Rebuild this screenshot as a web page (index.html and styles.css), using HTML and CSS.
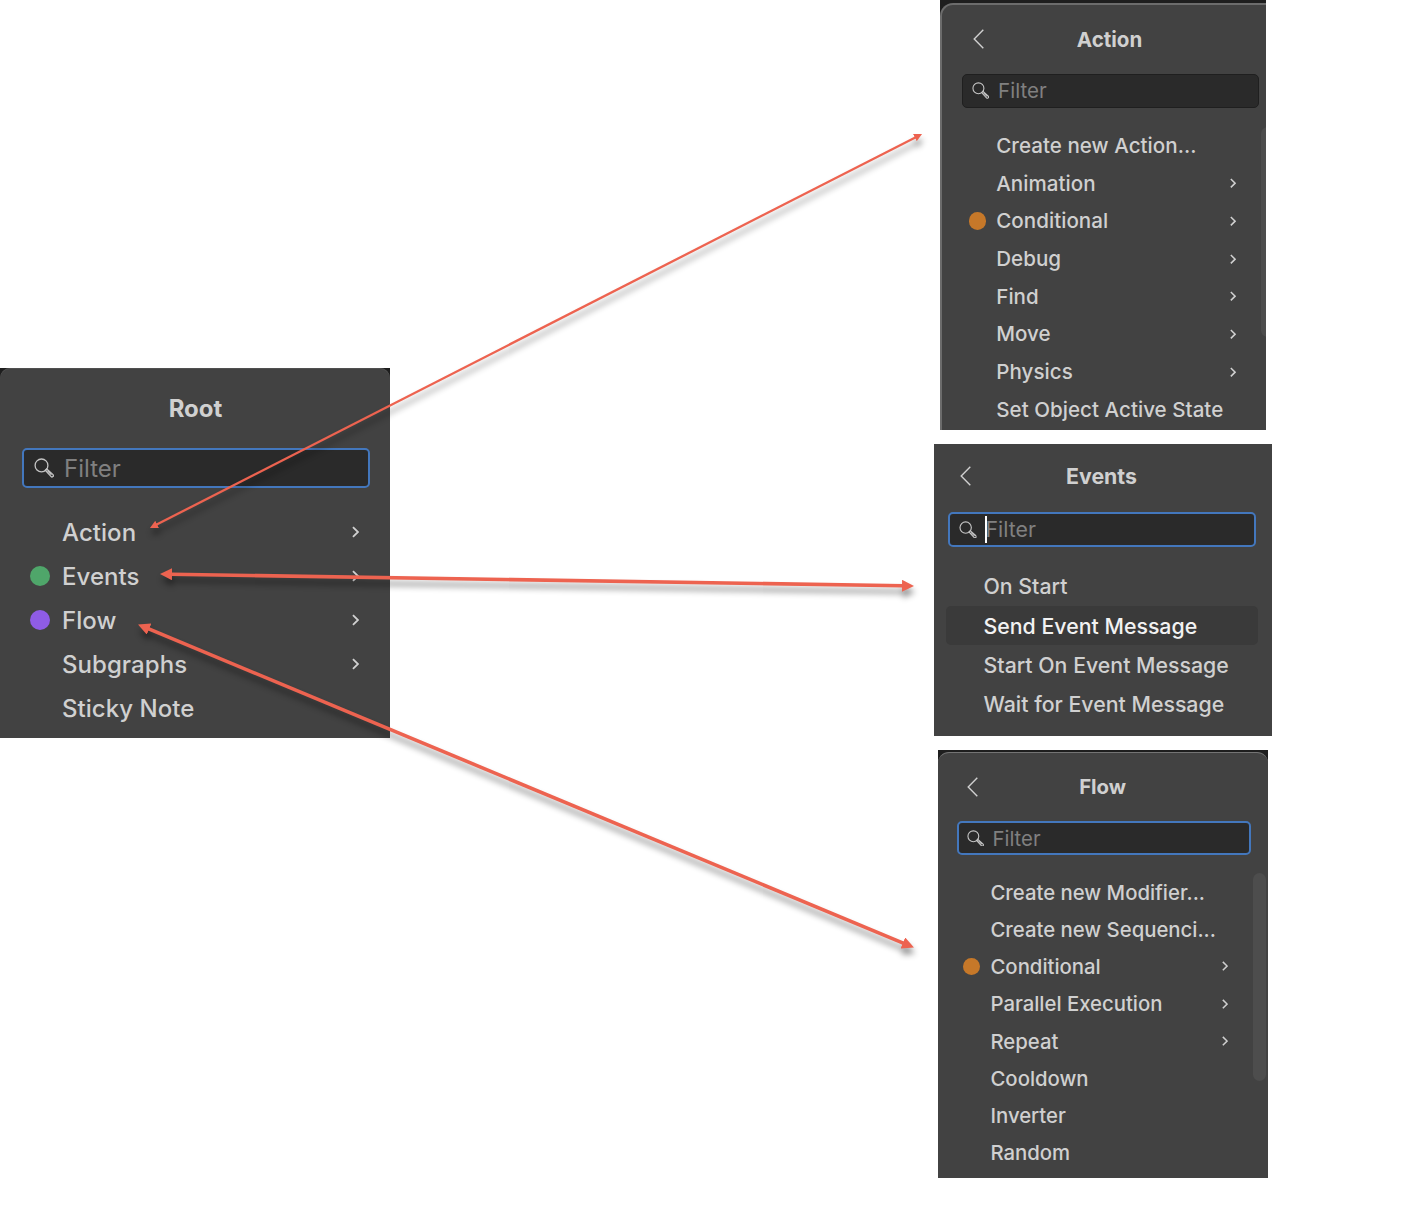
FILE: index.html
```html
<!DOCTYPE html>
<html lang="en">
<head>
<meta charset="utf-8">
<title>Node menu map</title>
<link rel="stylesheet" href="styles.css">
</head>
<body>
<svg class="defs" width="0" height="0" aria-hidden="true">
  <symbol id="search" viewBox="0 0 20 20">
    <circle cx="7.5" cy="7.4" r="6.4"/>
    <path d="M11.3 12.3l1.4-1.4 6.3 5.7q.9 1.1-.1 2t-2-.2z"/>
    <path d="M13.5 12.8l4 4"/>
  </symbol>
  <symbol id="next" viewBox="0 0 6 10"><path d="M.8.9L5 5 .8 9.1"/></symbol>
  <symbol id="back" viewBox="0 0 11 20"><path d="M10.3.8L1.2 10l9.1 9.2"/></symbol>
</svg>
<main class="board">
  <section class="panel root">
    <div class="surface">
      <header class="head"><h2 class="title">Root</h2></header>
      <div class="field focus"><svg class="glass"><use href="#search"/></svg><span class="hint">Filter</span></div>
      <ul class="list">
        <li class="row"><span class="label">Action</span><svg class="next"><use href="#next"/></svg></li>
        <li class="row"><i class="dot green"></i><span class="label">Events</span><svg class="next"><use href="#next"/></svg></li>
        <li class="row"><i class="dot purple"></i><span class="label">Flow</span><svg class="next"><use href="#next"/></svg></li>
        <li class="row"><span class="label">Subgraphs</span><svg class="next"><use href="#next"/></svg></li>
        <li class="row"><span class="label">Sticky Note</span></li>
      </ul>
    </div>
  </section>
  <div class="column">
    <section class="panel action">
      <div class="surface">
        <header class="head"><svg class="back"><use href="#back"/></svg><h2 class="title">Action</h2></header>
        <div class="field"><svg class="glass"><use href="#search"/></svg><span class="hint">Filter</span></div>
        <ul class="list">
          <li class="row"><span class="label">Create new Action...</span></li>
          <li class="row"><span class="label">Animation</span><svg class="next"><use href="#next"/></svg></li>
          <li class="row"><i class="dot orange"></i><span class="label">Conditional</span><svg class="next"><use href="#next"/></svg></li>
          <li class="row"><span class="label">Debug</span><svg class="next"><use href="#next"/></svg></li>
          <li class="row"><span class="label">Find</span><svg class="next"><use href="#next"/></svg></li>
          <li class="row"><span class="label">Move</span><svg class="next"><use href="#next"/></svg></li>
          <li class="row"><span class="label">Physics</span><svg class="next"><use href="#next"/></svg></li>
          <li class="row"><span class="label">Set Object Active State</span></li>
        </ul>
      </div>
      <div class="scrollbar"></div>
    </section>
    <section class="panel events">
      <div class="surface">
        <header class="head"><svg class="back"><use href="#back"/></svg><h2 class="title">Events</h2></header>
        <div class="field focus"><svg class="glass"><use href="#search"/></svg><span class="hint">Filter</span><span class="caret"></span></div>
        <ul class="list">
          <li class="row"><span class="label">On Start</span></li>
          <li class="row selected"><span class="label">Send Event Message</span></li>
          <li class="row"><span class="label">Start On Event Message</span></li>
          <li class="row"><span class="label">Wait for Event Message</span></li>
        </ul>
      </div>
    </section>
    <section class="panel flow">
      <div class="surface">
        <header class="head"><svg class="back"><use href="#back"/></svg><h2 class="title">Flow</h2></header>
        <div class="field focus"><svg class="glass"><use href="#search"/></svg><span class="hint">Filter</span></div>
        <ul class="list">
          <li class="row"><span class="label">Create new Modifier...</span></li>
          <li class="row"><span class="label">Create new Sequenci...</span></li>
          <li class="row"><i class="dot orange"></i><span class="label">Conditional</span><svg class="next"><use href="#next"/></svg></li>
          <li class="row"><span class="label">Parallel Execution</span><svg class="next"><use href="#next"/></svg></li>
          <li class="row"><span class="label">Repeat</span><svg class="next"><use href="#next"/></svg></li>
          <li class="row"><span class="label">Cooldown</span></li>
          <li class="row"><span class="label">Inverter</span></li>
          <li class="row"><span class="label">Random</span></li>
        </ul>
      </div>
      <div class="scrollbar"></div>
    </section>
  </div>
  <svg class="arrows" viewBox="0 0 1408 1212">
    <defs>
      <marker id="small" markerUnits="userSpaceOnUse" markerWidth="8" markerHeight="8" refX="1" refY="4" orient="auto-start-reverse"><path d="M0 0l8 4-8 4z"/></marker>
      <marker id="large" markerUnits="userSpaceOnUse" markerWidth="12" markerHeight="12" refX="1" refY="6" orient="auto-start-reverse"><path d="M0 0l12 6-12 6z"/></marker>
    </defs>
    <path class="link thin" d="M156.2 524.8L915.8 137.2"/>
    <path class="link" d="M171 574.2L903 585.8"/>
    <path class="link" d="M148.2 628.7L903.8 943.3"/>
  </svg>
</main>
</body>
</html>
```
FILE: styles.css
```css
* { box-sizing: border-box; }

body {
  margin: 0;
  background: #fff;
  font-family: Inter, "Liberation Sans", sans-serif;
  color: #d0d0d0;
}

.defs { position: absolute; }

.board {
  position: relative;
  display: flex;
  width: 1408px;
  height: 1212px;
  overflow: hidden;
}

.column {
  display: flex;
  flex-direction: column;
  align-items: flex-start;
  margin-left: 550px;
}

/* --u is the zoom factor of each menu */
.panel {
  position: relative;
  flex: none;
  overflow: hidden;
  background: #1e1e1e;
  font-size: calc(var(--u) * 12px);
}

.surface {
  height: 100%;
  padding-left: var(--inset);
  background: #424242;
}

.head {
  display: grid;
  grid-template-columns: 1fr auto 1fr;
  align-items: center;
  width: var(--field-width);
  height: var(--head);
}

.title {
  grid-column: 2;
  margin: 0;
  padding-top: var(--title-drop, 1px);
  padding-right: var(--title-shift, 1px);
  font-size: 1em;
  line-height: 1.2;
  font-weight: 700;
}

.back {
  width: 11px;
  height: 20px;
  margin-left: var(--back, 11px);
}

.back, .next, .glass {
  flex: none;
  display: block;
  fill: none;
  stroke: #d0d0d0;
}

.back { stroke-width: 1.4; }

.field {
  position: relative;
  display: flex;
  align-items: center;
  width: var(--field-width);
  height: var(--field-height);
  padding-left: calc(var(--u) * 5.5px);
  background: #2a2a2a;
  border: 1px solid #1f1f1f;
  border-radius: 5px;
}

.field.focus {
  border: 2px solid #4377bd;
  padding-left: calc(var(--u) * 5px);
}

.glass {
  width: calc(var(--u) * 10px);
  height: calc(var(--u) * 10px);
  stroke: #c4c4c4;
  stroke-width: 1.3;
}

.hint {
  margin-left: calc(var(--u) * 5px);
  padding-top: 1px;
  color: #808080;
  line-height: 1;
}

.caret {
  position: absolute;
  left: 35px;
  top: 2px;
  width: 2px;
  height: 27px;
  background: #fff;
}

.list {
  width: var(--field-width);
  margin: var(--gap) 0 0;
  padding: 0;
  list-style: none;
}

.row {
  display: flex;
  align-items: center;
  height: var(--row);
  padding-left: calc(var(--u) * 4px);
  padding-right: var(--end);
}

.dot {
  width: calc(var(--u) * 10px);
  height: calc(var(--u) * 10px);
  margin-right: calc(var(--u) * -10px);
  border-radius: 50%;
}

.green { background: #4fa66a; }
.purple { background: #8f5ce6; }
.orange { background: #c67829; }

.label {
  margin-left: calc(var(--u) * 16px);
  padding-top: var(--label-drop, 1.5px);
  line-height: 1.2;
  font-weight: 450;
  letter-spacing: var(--track);
  white-space: nowrap;
}

.next {
  width: calc(var(--u) * 3.6px);
  height: calc(var(--u) * 6px);
  margin-left: auto;
  stroke-width: 1.5;
}

.selected {
  width: 312px;
  margin-left: -2px;
  padding-left: calc(var(--u) * 4px + 2px);
  background: #3a3a3a;
  border-radius: 5px;
  color: #f2f2f2;
}

.scrollbar {
  position: absolute;
  width: 13px;
  border-radius: 6.5px;
  background: #4d4d4d;
}

.root {
  --u: 2;
  --inset: 22px;
  --head: 80px;
  --title-drop: 2px;
  --field-width: 348px;
  --field-height: 40px;
  --gap: 22px;
  --row: 44px;
  --end: 11px;
  --track: .05px;
  --label-drop: 3px;
  width: 390px;
  height: 370px;
  margin-top: 368px;
}

.root .surface {
  border-radius: 10px 10px 0 0;
  box-shadow: inset 0 1px #505050;
}

.action {
  --u: 1.713;
  --inset: 20px;
  --head: 68.5px;
  --title-drop: 2px;
  --title-shift: 2px;
  --field-width: 297px;
  --field-height: 34.5px;
  --gap: 18.8px;
  --row: 37.7px;
  --end: 22.5px;
  --track: .04px;
  width: 326px;
  height: 430px;
  padding-top: 3px;
}

.action .surface {
  border: solid #6c6c6c;
  border-width: 2px 0 0 2px;
  border-radius: 13px 0 0 0;
}

.action .scrollbar { left: 321px; top: 127px; height: 210px; }

.events {
  --u: 1.777;
  --inset: 14px;
  --head: 68px;
  --title-drop: 1px;
  --back: 11.7px;
  --field-width: 308px;
  --field-height: 35px;
  --gap: 19.8px;
  --row: 39.2px;
  --end: 0px;
  --track: 0px;
  width: 338px;
  height: 292px;
  margin: 14px 0 14px -6px;
}

.events .head { padding-bottom: 4px; }

.flow {
  --u: 1.695;
  --inset: 18.6px;
  --head: 68px;
  --title-shift: 2px;
  --back: 10.4px;
  --field-width: 294px;
  --field-height: 34px;
  --gap: 18.4px;
  --row: 37.25px;
  --end: 22.5px;
  --track: -.01px;
  width: 330px;
  height: 428px;
  margin-left: -2px;
  padding-top: 2px;
}

.flow .hint { padding-top: 2px; }

.flow .surface {
  border-top: 1.5px solid #747474;
  border-radius: 11px 11px 0 0;
}

.flow .scrollbar { left: 315px; top: 123px; height: 208px; }

.arrows {
  position: absolute;
  inset: 0;
  width: 1408px;
  height: 1212px;
  fill: #ed6350;
  filter: drop-shadow(1px 6px 3px rgba(0, 0, 0, .45));
}

.link {
  fill: none;
  stroke: #ed6350;
  stroke-width: 3.6;
  marker-start: url(#large);
  marker-end: url(#large);
}

.thin {
  stroke-width: 2.3;
  marker-start: url(#small);
  marker-end: url(#small);
}
```
